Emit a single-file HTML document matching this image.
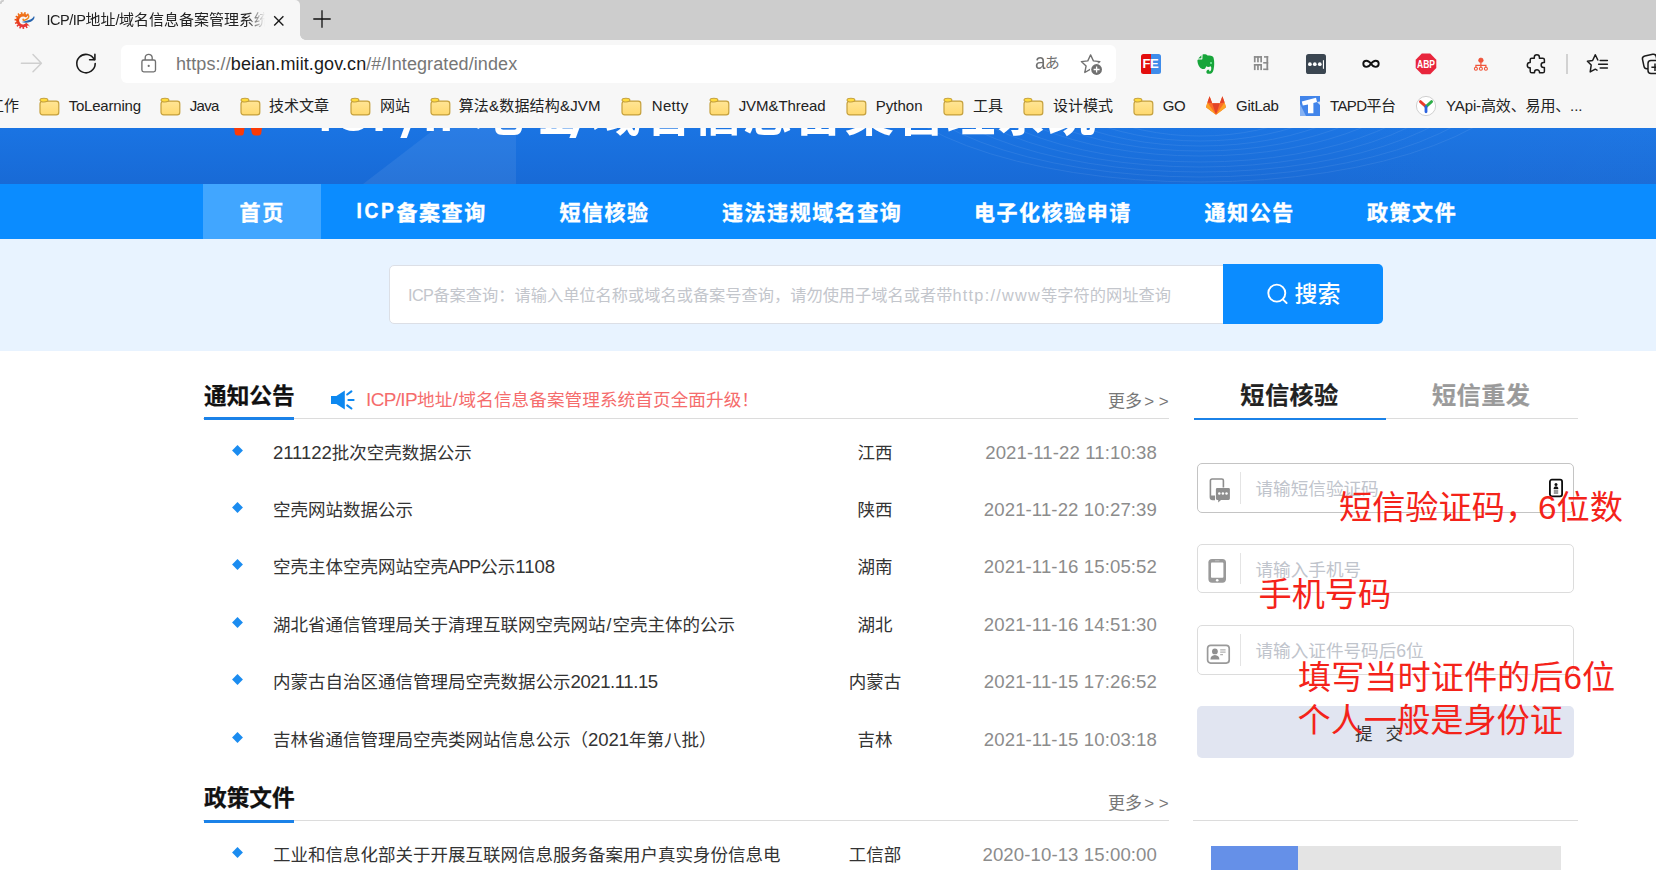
<!DOCTYPE html>
<html lang="zh-CN">
<head>
<meta charset="utf-8">
<title>ICP/IP地址/域名信息备案管理系统</title>
<style>
*{box-sizing:border-box;margin:0;padding:0}
html,body{width:1656px;height:870px;overflow:hidden;background:#fff}
body{font-family:"Liberation Sans","Noto Sans CJK SC",sans-serif;color:#333;position:relative}
.abs{position:absolute}
/* ---------- browser chrome ---------- */
#tabbar{position:absolute;left:0;top:0;width:1656px;height:39.6px;background:#cdcdcd}
#tab{position:absolute;left:0;top:0;width:300px;height:40px;background:#f7f7f7;border-radius:0 5px 0 0}
#tabcurve{position:absolute;left:300px;top:33.6px;width:6px;height:6px;background:radial-gradient(circle at 100% 0,rgba(0,0,0,0) 5.6px,#f7f7f7 6.2px)}
#tabtitle{position:absolute;left:46.5px;top:8.5px;width:220px;height:22px;line-height:22px;font-size:15px;color:#222;white-space:nowrap;overflow:hidden;-webkit-mask-image:linear-gradient(90deg,#000 200px,transparent 218px);mask-image:linear-gradient(90deg,#000 200px,transparent 218px)}
.lt{font-size:14.5px;letter-spacing:-0.5px}
#toolbar{position:absolute;left:0;top:39.6px;width:1656px;height:49px;background:#f7f7f7}
#addr{position:absolute;left:121px;top:45px;width:995px;height:37.5px;background:#fff;border-radius:6px}
#url{position:absolute;left:176px;top:51.5px;height:24px;line-height:24px;font-size:18px;color:#767676;white-space:nowrap;letter-spacing:0.1px}
#url b{font-weight:400;color:#1b1b1b}
#bookmarks{position:absolute;left:0;top:88px;width:1656px;height:40px;background:#f7f7f7}
.bm{position:absolute;top:94.5px;height:22px;line-height:22px;font-size:15px;color:#222;white-space:nowrap}
.fold{position:absolute;top:96.5px;width:21px;height:19px;margin-left:-0.5px}
/* ---------- page ---------- */
#hero{position:absolute;left:0;top:128px;width:1656px;height:56px;background:linear-gradient(180deg,#1a74e3 0%,#186ad6 100%);overflow:hidden}
#htitle{position:absolute;left:318.5px;top:-44px;font-size:49px;line-height:60px;font-weight:700;color:#fff;letter-spacing:1.7px;white-space:nowrap}
.sl{display:inline-block;transform:translate(-3.5px,5.5px) skewX(-9deg) scale(1.1,1)}
#nav{position:absolute;left:0;top:184px;width:1656px;height:55px;background:#0b8cff}
#navact{position:absolute;left:203px;top:184px;width:118px;height:55px;background:#41a6ff}
.ni{position:absolute;top:196.7px;height:32px;line-height:32px;font-size:21px;font-weight:700;color:#fff;letter-spacing:1.55px;-webkit-text-stroke:0.4px #fff;white-space:nowrap}
#searchbg{position:absolute;left:0;top:239px;width:1656px;height:112px;background:#e8f3ff}
#sinput{position:absolute;left:388.5px;top:265.3px;width:836px;height:59px;background:#fff;border:1px solid #dcdfe6;border-radius:5px 0 0 5px}
#sph{position:absolute;left:408px;top:283px;height:24px;line-height:24px;font-size:16.23px;color:#c3c6cc;white-space:nowrap}
#sbtn{position:absolute;left:1223px;top:264px;width:160px;height:60px;background:#0b8cff;border-radius:0 5px 5px 0}
#sbtn span{position:absolute;left:71.5px;top:13.5px;font-weight:500;font-size:23px;line-height:32px;color:#fff;white-space:nowrap}
.h2{position:absolute;font-size:22.7px;-webkit-text-stroke:0.25px #111;font-weight:700;color:#111;line-height:30px;white-space:nowrap}
.hr{position:absolute;height:1px;background:#dcdcdc}
.bl{position:absolute;height:2.4px;background:#1b82e8}
.more{position:absolute;font-size:17px;color:#777;line-height:24px;white-space:nowrap}
.row{position:absolute;left:203px;width:966px;height:30px;line-height:30px;font-size:17.5px;color:#333;white-space:nowrap}
.row i{position:absolute;left:30.3px;top:8px;width:9px;height:9px;background:#1b8cf0;transform:rotate(45deg) scale(.85)}
.row .t{position:absolute;left:70px;top:0}
.row .r{position:absolute;left:612px;width:120px;text-align:center;top:0}
.row .d{position:absolute;right:12px;top:0;color:#8c8c8c;font-size:18.6px;letter-spacing:0.1px}
.n{font-size:18.6px;letter-spacing:-0.1px}
.gg{font-size:17px;letter-spacing:4.6px;margin-left:2.2px;position:relative;top:-0.4px}
.tabr{position:absolute;font-size:24.2px;font-weight:700;line-height:30px;letter-spacing:0.4px;-webkit-text-stroke:0.2px currentColor;white-space:nowrap}
.inp{position:absolute;left:1197px;width:377px;height:49.6px;border:1px solid #dcdcdc;border-radius:5px;background:#fff}
.inp .sep{position:absolute;left:41.6px;top:8px;width:1px;height:31.5px;background:#e4e4e4}
.inp .ph{position:absolute;left:57.5px;top:13px;font-size:17.6px;line-height:24px;color:#c0c4cc;white-space:nowrap}
.red{position:absolute;color:#f4231a;font-size:33.2px;line-height:42px;white-space:nowrap}
#submit{position:absolute;left:1197px;top:706px;width:377px;height:52px;background:#e1e5f1;border-radius:5px}
#submit span{position:absolute;left:158px;top:14.5px;font-size:17.6px;line-height:26px;color:#333;letter-spacing:13px}
</style>
</head>
<body>
<!-- BROWSER CHROME -->
<div id="tabbar"></div>
<div id="tab"></div><div id="tabcurve"></div>
<div class="abs" style="left:0;top:0;width:4px;height:4px;background:radial-gradient(circle at 100% 100%,rgba(0,0,0,0) 2.2px,#c6c6c6 3px,#d6d6d6 4.2px,rgba(0,0,0,0) 5px)"></div>
<div id="tabtitle"><span class="lt">ICP/IP</span>地址<span class="lt">/</span>域名信息备案管理系统</div>
<div id="toolbar"></div>
<div id="addr"></div>
<div id="url">https://<b>beian.miit.gov.cn</b>/#/Integrated/index</div>
<div id="bookmarks"></div>
<div class="bm" style="left:-11px">工作</div>
<svg class="fold" style="left:39px" viewBox="0 0 21 19"><defs><linearGradient id="gfo" x1="0" y1="0" x2="0" y2="1"><stop offset="0" stop-color="#ffe596"/><stop offset="1" stop-color="#ffd96e"/></linearGradient></defs><rect x="1" y="4.1" width="18.8" height="13.8" rx="2.6" fill="url(#gfo)" stroke="#c5a03c" stroke-width="1.2"/><ellipse cx="4.95" cy="3.1" rx="3.95" ry="1.9" fill="#ffdb3e" stroke="#c5a03c" stroke-width="1.1"/></svg>
<div class="bm" style="left:68.7px;letter-spacing:-0.21px">ToLearning</div>
<svg class="fold" style="left:160px" viewBox="0 0 21 19"><rect x="1" y="4.1" width="18.8" height="13.8" rx="2.6" fill="url(#gfo)" stroke="#c5a03c" stroke-width="1.2"/><ellipse cx="4.95" cy="3.1" rx="3.95" ry="1.9" fill="#ffdb3e" stroke="#c5a03c" stroke-width="1.1"/></svg>
<div class="bm" style="left:189.7px;letter-spacing:-0.65px">Java</div>
<svg class="fold" style="left:240px" viewBox="0 0 21 19"><rect x="1" y="4.1" width="18.8" height="13.8" rx="2.6" fill="url(#gfo)" stroke="#c5a03c" stroke-width="1.2"/><ellipse cx="4.95" cy="3.1" rx="3.95" ry="1.9" fill="#ffdb3e" stroke="#c5a03c" stroke-width="1.1"/></svg>
<div class="bm" style="left:269px">技术文章</div>
<svg class="fold" style="left:350px" viewBox="0 0 21 19"><rect x="1" y="4.1" width="18.8" height="13.8" rx="2.6" fill="url(#gfo)" stroke="#c5a03c" stroke-width="1.2"/><ellipse cx="4.95" cy="3.1" rx="3.95" ry="1.9" fill="#ffdb3e" stroke="#c5a03c" stroke-width="1.1"/></svg>
<div class="bm" style="left:380px">网站</div>
<svg class="fold" style="left:430px" viewBox="0 0 21 19"><rect x="1" y="4.1" width="18.8" height="13.8" rx="2.6" fill="url(#gfo)" stroke="#c5a03c" stroke-width="1.2"/><ellipse cx="4.95" cy="3.1" rx="3.95" ry="1.9" fill="#ffdb3e" stroke="#c5a03c" stroke-width="1.1"/></svg>
<div class="bm" style="left:458.7px;letter-spacing:0.18px">算法&amp;数据结构&amp;JVM</div>
<svg class="fold" style="left:621px" viewBox="0 0 21 19"><rect x="1" y="4.1" width="18.8" height="13.8" rx="2.6" fill="url(#gfo)" stroke="#c5a03c" stroke-width="1.2"/><ellipse cx="4.95" cy="3.1" rx="3.95" ry="1.9" fill="#ffdb3e" stroke="#c5a03c" stroke-width="1.1"/></svg>
<div class="bm" style="left:651.7px;letter-spacing:0.36px">Netty</div>
<svg class="fold" style="left:709px" viewBox="0 0 21 19"><rect x="1" y="4.1" width="18.8" height="13.8" rx="2.6" fill="url(#gfo)" stroke="#c5a03c" stroke-width="1.2"/><ellipse cx="4.95" cy="3.1" rx="3.95" ry="1.9" fill="#ffdb3e" stroke="#c5a03c" stroke-width="1.1"/></svg>
<div class="bm" style="left:738.7px;letter-spacing:-0.07px">JVM&amp;Thread</div>
<svg class="fold" style="left:846px" viewBox="0 0 21 19"><rect x="1" y="4.1" width="18.8" height="13.8" rx="2.6" fill="url(#gfo)" stroke="#c5a03c" stroke-width="1.2"/><ellipse cx="4.95" cy="3.1" rx="3.95" ry="1.9" fill="#ffdb3e" stroke="#c5a03c" stroke-width="1.1"/></svg>
<div class="bm" style="left:875.7px;letter-spacing:0.02px">Python</div>
<svg class="fold" style="left:943px" viewBox="0 0 21 19"><rect x="1" y="4.1" width="18.8" height="13.8" rx="2.6" fill="url(#gfo)" stroke="#c5a03c" stroke-width="1.2"/><ellipse cx="4.95" cy="3.1" rx="3.95" ry="1.9" fill="#ffdb3e" stroke="#c5a03c" stroke-width="1.1"/></svg>
<div class="bm" style="left:973px">工具</div>
<svg class="fold" style="left:1023px" viewBox="0 0 21 19"><rect x="1" y="4.1" width="18.8" height="13.8" rx="2.6" fill="url(#gfo)" stroke="#c5a03c" stroke-width="1.2"/><ellipse cx="4.95" cy="3.1" rx="3.95" ry="1.9" fill="#ffdb3e" stroke="#c5a03c" stroke-width="1.1"/></svg>
<div class="bm" style="left:1053px">设计模式</div>
<svg class="fold" style="left:1133px" viewBox="0 0 21 19"><rect x="1" y="4.1" width="18.8" height="13.8" rx="2.6" fill="url(#gfo)" stroke="#c5a03c" stroke-width="1.2"/><ellipse cx="4.95" cy="3.1" rx="3.95" ry="1.9" fill="#ffdb3e" stroke="#c5a03c" stroke-width="1.1"/></svg>
<div class="bm" style="left:1162.7px;letter-spacing:-0.25px">GO</div>
<div class="bm" style="left:1236.0px;letter-spacing:-0.25px">GitLab</div>
<div class="bm" style="left:1329.9px;letter-spacing:-0.55px">TAPD平台</div>
<div class="bm" style="left:1446.1px;letter-spacing:-0.14px">YApi-高效、易用、...</div>

<!-- toolbar icons -->
<svg class="abs" style="left:10.5px;top:6px" width="28" height="28" viewBox="0 0 28 28">
 <defs><linearGradient id="gfav" x1="0" y1="0" x2="0" y2="1"><stop offset="0" stop-color="#f0761a"/><stop offset=".5" stop-color="#e8410f"/><stop offset="1" stop-color="#e8343a"/></linearGradient></defs>
 <path d="M16.06 10.58 A5.50 5.50 0 1 0 16.43 17.79" fill="none" stroke="url(#gfav)" stroke-width="3"/>
 <path d="M17.28 9.04 A7.45 7.45 0 1 0 17.81 19.19" fill="none" stroke="url(#gfav)" stroke-width="2.2" stroke-dasharray="1.50 1.62"/>
 <path d="M10.6 15.9 C14.6 17.4 20 16.6 22.6 13.4 C23.6 12.2 23.8 10.8 23 9.9 C22.4 11.6 20.4 13.4 17.2 14.3 C15 14.9 12.6 15.5 10.6 15.9 Z" fill="#2764ae"/>
 <path d="M17.6 9.6 C18.4 11.4 16.6 13.6 13.4 14.2 C12.4 14.4 11.8 14 12.2 13.2" fill="none" stroke="#f0861c" stroke-width="1.5" stroke-linecap="round"/>
</svg>
<svg class="abs" style="left:269.3px;top:10.6px" width="20" height="20" viewBox="0 0 20 20"><path d="M5.2 5.2 L14.4 14.4 M14.4 5.2 L5.2 14.4" stroke="#1a1a1a" stroke-width="1.35" fill="none"/></svg>
<svg class="abs" style="left:310.6px;top:8.3px" width="22" height="22" viewBox="0 0 22 22"><path d="M11 2.3 V19.7 M2.3 11 H19.7" stroke="#111" stroke-width="1.3" fill="none"/></svg>
<svg class="abs" style="left:18px;top:51px" width="26" height="26" viewBox="0 0 26 26"><path d="M3.4 12.2 H23 M15 3.6 L23.4 12.2 L15 20.8" stroke="#cfcfcf" stroke-width="1.5" fill="none" stroke-linecap="round" stroke-linejoin="round"/></svg>
<svg class="abs" style="left:73px;top:51px" width="26" height="26" viewBox="0 0 26 26"><path d="M21.3 8.6 A9.2 9.2 0 1 0 22.2 12.6" stroke="#1b1b1b" stroke-width="1.6" fill="none" stroke-linecap="round"/><path d="M16.6 8.7 H21.9 V3.4" stroke="#1b1b1b" stroke-width="1.6" fill="none" stroke-linecap="round" stroke-linejoin="round"/></svg>
<svg class="abs" style="left:138px;top:51px" width="22" height="24" viewBox="0 0 22 24"><rect x="3.9" y="9" width="13.6" height="11.8" rx="1.8" fill="none" stroke="#707070" stroke-width="1.35"/><path d="M7.2 9 V6.8 A3.5 3.5 0 0 1 14.2 6.8 V9" fill="none" stroke="#707070" stroke-width="1.35"/><circle cx="10.7" cy="14.9" r="1.1" fill="#707070"/></svg>
<div class="abs" style="left:1034.5px;top:49px;height:26px;line-height:26px;color:#707070;white-space:nowrap"><span style="display:inline-block;font-size:22px;transform:scale(.86,1.04);transform-origin:0 78%">a</span><span style="font-size:15px;margin-left:-2px;position:relative;top:-0.9px">あ</span></div>
<svg class="abs" style="left:1078px;top:51px" width="28" height="26" viewBox="0 0 28 26"><path d="M12.6 3.9 L15.4 9.9 L21.9 10.6 L17.1 15 L18.4 21.5 L12.6 18.2 L6.8 21.5 L8.1 15 L3.3 10.6 L9.8 9.9 Z" fill="none" stroke="#707070" stroke-width="1.35" stroke-linejoin="round"/><circle cx="18.6" cy="18.5" r="6.6" fill="#fff"/><circle cx="18.6" cy="18.5" r="5.4" fill="#707070"/><path d="M18.6 15.5 V21.5 M15.6 18.5 H21.6" stroke="#fff" stroke-width="1.3"/></svg>
<!-- FE -->
<div class="abs" style="left:1141px;top:53.5px;width:20px;height:20px;border-radius:2.5px;overflow:hidden;background:linear-gradient(90deg,#e30e0e 0,#e30e0e 52%,#3f8cea 52%)"><span style="position:absolute;left:1.6px;top:2.2px;font-size:13px;line-height:15px;font-weight:700;color:#fff;letter-spacing:-0.6px">FE</span></div>
<!-- evernote -->
<svg class="abs" style="left:1196px;top:53px" width="20" height="22" viewBox="0 0 20 22"><path d="M6.6 1.6 C8 1 10.6 1.2 11.6 2.4 C14 2.4 16.4 2.8 17.2 4 C18.4 6.6 18.6 12.4 17.6 16.4 C17 19.6 15.4 20.8 12.8 20.8 C11 20.8 10.2 19.8 10.4 18.4 C10.6 17 11.8 16.6 13.2 16.8 L13.2 18.2 C14.4 18.4 15 17.6 15.2 16.2 C15.4 14.6 15.2 13.6 14.6 13.2 C13.4 14 11.4 14.2 10.2 13.2 C9.6 15.6 8.4 16.4 6.4 16 C3.6 15.4 1.6 11.6 1.4 7.6 C1.4 6.8 2 6.4 2.8 6.4 L5.6 6.4 C6.2 6.4 6.4 6 6.4 5.4 Z" fill="#17a53a"/><path d="M5.4 2.2 L5.4 5.2 L2.2 5.4 Z" fill="#17a53a"/><circle cx="15" cy="10" r="1" fill="#7df0a4"/></svg>
<!-- gray m3 -->
<svg class="abs" style="left:1253px;top:55px" width="17" height="17" viewBox="0 0 17 17" fill="#8b8b8b"><rect x="0.9" y="1.1" width="8.1" height="1.7"/><rect x="0.9" y="1.1" width="1.7" height="6.2"/><rect x="4.1" y="1.1" width="1.7" height="6.2"/><rect x="7.3" y="1.1" width="1.7" height="6.2"/><rect x="0.9" y="9" width="8.1" height="1.7"/><rect x="0.9" y="9" width="1.7" height="6.1"/><rect x="4.1" y="9" width="1.7" height="6.1"/><rect x="7.3" y="9" width="1.7" height="6.1"/><rect x="11" y="1.1" width="4.2" height="1.6"/><rect x="13.4" y="1.1" width="1.8" height="14"/><rect x="10.2" y="7" width="5" height="1.6"/><rect x="10.2" y="13.5" width="5" height="1.6"/></svg>
<!-- dark box -->
<div class="abs" style="left:1306px;top:53.7px;width:20px;height:20px;border-radius:2.6px;background:#3b4651"></div>
<svg class="abs" style="left:1306px;top:53.7px" width="20" height="20" viewBox="0 0 20 20"><circle cx="3.9" cy="10.2" r="1.85" fill="#fff"/><circle cx="8.8" cy="10.2" r="1.85" fill="#fff"/><circle cx="13.8" cy="10.2" r="1.85" fill="#fff"/><rect x="16.9" y="6.2" width="1.1" height="8.6" fill="#fff"/></svg>
<!-- infinity -->
<svg class="abs" style="left:1360px;top:56px" width="22" height="16" viewBox="0 0 22 16"><path d="M11 7.8 C9.6 5.7 8 4.7 6.4 4.7 A3.1 3.1 0 0 0 6.4 10.9 C8 10.9 9.6 9.9 11 7.8 C12.4 5.7 14 4.7 15.6 4.7 A3.1 3.1 0 0 1 15.6 10.9 C14 10.9 12.4 9.9 11 7.8 Z" fill="none" stroke="#111" stroke-width="1.9"/></svg>
<!-- ABP -->
<svg class="abs" style="left:1415px;top:53px" width="22" height="22" viewBox="0 0 22 22"><path d="M6.8 0.6 H15.2 L21.3 6.7 V15.1 L15.2 21.2 H6.8 L0.7 15.1 V6.7 Z" fill="#e8253c"/><text x="2" y="14.6" textLength="18" lengthAdjust="spacingAndGlyphs" font-family="Liberation Sans, sans-serif" font-weight="700" font-size="10.2" fill="#fff">ABP</text></svg>
<!-- sitemap -->
<svg class="abs" style="left:1472px;top:56px" width="18" height="17" viewBox="0 0 18 17"><circle cx="8.9" cy="4.3" r="2.3" fill="#f2553c" stroke="#e8452c" stroke-width=".6"/><path d="M8.9 6.6 V9.4 M3.9 11.2 V9.4 H13.9 V11.2 M8.9 9.4 V11.2" stroke="#f0553a" stroke-width="1.2" fill="none"/><circle cx="3.9" cy="12.7" r="1.5" fill="none" stroke="#f0553a" stroke-width="1.1"/><circle cx="8.9" cy="12.7" r="1.5" fill="none" stroke="#f0553a" stroke-width="1.1"/><circle cx="13.9" cy="12.7" r="1.5" fill="none" stroke="#f0553a" stroke-width="1.1"/></svg>
<!-- puzzle -->
<svg class="abs" style="left:1524px;top:51px" width="24" height="26" viewBox="0 0 24 26"><path d="M10.3 6.3 A2.55 2.55 0 0 1 15.4 6.3 V7.2 H18.8 Q20.4 7.2 20.4 8.8 V11.6 H19.6 A2.45 2.45 0 0 0 19.6 16.5 H20.4 V20.2 Q20.4 21.8 18.8 21.8 H15.5 V21.2 A2.5 2.5 0 0 0 10.5 21.2 V21.8 H7.8 Q6.2 21.8 6.2 20.2 V16.8 H5.9 A2.6 2.6 0 0 1 5.9 11.6 H6.2 V8.8 Q6.2 7.2 7.8 7.2 H10.3 Z" fill="none" stroke="#1b1b1b" stroke-width="1.5" stroke-linejoin="round"/></svg>
<div class="abs" style="left:1566.4px;top:54px;width:1.4px;height:19.5px;background:#d2d2d2"></div>
<!-- favorites -->
<svg class="abs" style="left:1584px;top:51px" width="28" height="26" viewBox="0 0 28 26"><path d="M13.8 9 L11.3 3.8 L8.6 9.5 L3.4 10.2 L7.2 14 L6.2 20.9 L11.3 18.2 L13 19.1" fill="none" stroke="#1b1b1b" stroke-width="1.5" stroke-linejoin="round" stroke-linecap="round"/><path d="M16.2 9.6 H23.4 M14.6 13.3 H23.4 M16.2 17 H23.4" stroke="#1b1b1b" stroke-width="1.5" stroke-linecap="round"/></svg>
<!-- collections -->
<svg class="abs" style="left:1640px;top:51px" width="16" height="26" viewBox="0 0 16 26"><rect x="3" y="4" width="14" height="13" rx="3" transform="rotate(-12 10 10)" fill="none" stroke="#1b1b1b" stroke-width="1.5"/><rect x="8" y="9.5" width="14" height="13" rx="3" fill="#f7f7f7" stroke="#1b1b1b" stroke-width="1.5"/><path d="M15 12.5 V20 M11.4 16.2 H18" stroke="#1b1b1b" stroke-width="1.5"/></svg>
<!-- bookmark favicons -->
<svg class="abs" style="left:1205px;top:95px" width="22" height="21" viewBox="0 0 22 21"><path d="M11 19.8 L1 12.2 L2.4 7.6 L4.6 1.2 L7.2 8.2 H14.8 L17.4 1.2 L19.6 7.6 L21 12.2 Z" fill="#fc6d26"/><path d="M11 19.8 L7.2 8.2 H14.8 Z" fill="#e24329"/><path d="M11 19.8 L1 12.2 L2.4 7.6 Z M11 19.8 L21 12.2 L19.6 7.6 Z" fill="#fca326"/><path d="M2.4 7.6 L4.6 1.2 L7.2 8.2 Z M19.6 7.6 L17.4 1.2 L14.8 8.2 Z" fill="#e24329"/></svg>
<svg class="abs" style="left:1300px;top:96px" width="20" height="20" viewBox="0 0 20 20"><rect width="20" height="20" fill="#4285ea"/><path d="M1.8 5.6 L16 1.8 L17 6 L13.4 7 V17.2 H8 V8.4 L2.8 9.6 Z" fill="#fff"/><path d="M0 8 L6 20 H0 Z" fill="#8db6f4" opacity=".9"/><path d="M17 6 L20 5.4 V9 Z" fill="#cfe0fa"/></svg>
<svg class="abs" style="left:1415px;top:94.5px" width="22" height="22" viewBox="0 0 22 22"><circle cx="11" cy="11" r="9.6" fill="#fff" stroke="#d0d0d0" stroke-width="1"/><path d="M11 11.6 L5.4 6.6" stroke="#ea3a2c" stroke-width="2.8" stroke-linecap="round"/><path d="M11 11.6 L16.6 6.6" stroke="#2fae4a" stroke-width="2.8" stroke-linecap="round"/><path d="M11 11.6 V16.8" stroke="#2a62e0" stroke-width="2.8" stroke-linecap="round"/></svg>
<!-- PAGE -->
<div id="hero">
<div class="abs" style="left:0;top:0;width:1656px;height:56px;background:linear-gradient(90deg,rgba(255,255,255,0) 0,rgba(255,255,255,0) 60%,rgba(255,255,255,.02) 100%)"></div>
<svg class="abs" style="left:340px;top:0" width="200" height="56" viewBox="0 0 200 56"><path d="M23 56 L96 0 H176 V56 Z" fill="#ffffff" opacity=".07"/></svg>
<svg class="abs" style="left:230px;top:0" width="36" height="10" viewBox="0 0 36 10"><path d="M4.2 0 H14.6 L13.6 6 Q13.2 7.6 11.4 7.6 H7.2 Q5.2 7.6 4.9 5.8 Z" fill="#fb3a06"/><path d="M20.8 0 H32 L31.2 5.6 Q30.8 7.6 28.6 7.6 H25 Q22.8 7.6 22 5.6 Z" fill="#fb3a06"/></svg>
<svg class="abs" style="left:900px;top:0" width="756" height="56" viewBox="0 0 756 56" fill="none" stroke="#fff" stroke-width="1" opacity=".07"><ellipse cx="300" cy="-70" rx="150" ry="78"/><ellipse cx="300" cy="-70" rx="170" ry="83"/><ellipse cx="300" cy="-70" rx="190" ry="88"/><ellipse cx="300" cy="-70" rx="210" ry="93"/><ellipse cx="300" cy="-70" rx="230" ry="98"/><ellipse cx="300" cy="-70" rx="250" ry="104"/><ellipse cx="300" cy="-70" rx="270" ry="109"/><ellipse cx="300" cy="-70" rx="290" ry="114"/><ellipse cx="300" cy="-70" rx="310" ry="119"/><ellipse cx="300" cy="-70" rx="330" ry="124"/></svg>
<div id="htitle"><span style="letter-spacing:2.4px">ICP<span class="sl">/</span>IP</span>地址<span class="sl">/</span>域名信息备案管理系统</div>
</div>
<div id="nav"></div><div id="navact"></div>
<div class="ni" style="left:239.6px">首页</div>
<div class="ni" style="left:356.4px"><span style="display:inline-block;letter-spacing:2.7px;font-size:19.2px;transform:translateY(-1.4px) scaleY(1.115);transform-origin:0 72%">ICP</span>备案查询</div>
<div class="ni" style="left:559.4px">短信核验</div>
<div class="ni" style="left:722px">违法违规域名查询</div>
<div class="ni" style="left:974px">电子化核验申请</div>
<div class="ni" style="left:1204.6px">通知公告</div>
<div class="ni" style="left:1367px">政策文件</div>
<div id="searchbg"></div>
<div id="sinput"></div>
<div id="sph"><span style="letter-spacing:-0.55px">ICP</span>备案查询：请输入单位名称或域名或备案号查询，请勿使用子域名或者带<span id="hw" style="letter-spacing:1.3px">http://www</span>等字符的网址查询</div>
<div id="sbtn"><svg style="position:absolute;left:40px;top:16px" width="28" height="28" viewBox="0 0 28 28"><circle cx="13.8" cy="13.1" r="8.5" fill="none" stroke="#fff" stroke-width="1.9"/><path d="M19.8 19.4 L23.6 23" stroke="#fff" stroke-width="1.9" stroke-linecap="round"/></svg><span>搜索</span></div>

<div class="h2" style="left:204px;top:381.3px">通知公告</div>
<div class="hr" style="left:203px;top:418px;width:965.7px"></div>
<div class="bl" style="left:204px;top:417.4px;width:90px"></div>
<div class="abs" style="left:366px;top:388px;font-size:17.6px;line-height:24px;color:#f56c6c;letter-spacing:0.08px;white-space:nowrap"><span id="nl" style="font-size:19px;letter-spacing:-0.65px">ICP/IP</span>地址<span id="ns" style="font-size:19px;letter-spacing:0.5px;margin-left:0.4px">/</span>域名信息备案管理系统首页全面升级！</div>
<svg class="abs" style="left:330px;top:388px" width="26" height="24" viewBox="0 0 26 24"><path d="M1 8.1 H6.4 L14.8 2.6 V21.4 L6.4 15.9 H1 Z" fill="#0d88f0"/><path d="M18.4 12 H23.6 M17.2 6.5 L21.4 3.3 M17.2 17.3 L21.4 20.5" stroke="#0d88f0" stroke-width="2.1" stroke-linecap="round"/></svg>
<div class="more" style="left:1108px;top:390px">更多<span class="gg">&gt;&gt;</span></div>
<div class="row" style="top:437.5px"><i></i><span class="t"><span class="n">211122</span>批次空壳数据公示</span><span class="r">江西</span><span class="d">2021-11-22 11:10:38</span></div>
<div class="row" style="top:494.9px"><i></i><span class="t">空壳网站数据公示</span><span class="r">陕西</span><span class="d">2021-11-22 10:27:39</span></div>
<div class="row" style="top:552.3px"><i></i><span class="t">空壳主体空壳网站空壳<span style="letter-spacing:-0.9px">APP</span>公示<span class="n">1108</span></span><span class="r">湖南</span><span class="d">2021-11-16 15:05:52</span></div>
<div class="row" style="top:609.7px"><i></i><span class="t">湖北省通信管理局关于清理互联网空壳网站<span style="letter-spacing:1.2px;margin-left:1px">/</span>空壳主体的公示</span><span class="r">湖北</span><span class="d">2021-11-16 14:51:30</span></div>
<div class="row" style="top:667.1px"><i></i><span class="t">内蒙古自治区通信管理局空壳数据公示<span class="n" style="letter-spacing:-0.45px">2021.11.15</span></span><span class="r">内蒙古</span><span class="d">2021-11-15 17:26:52</span></div>
<div class="row" style="top:724.5px"><i></i><span class="t">吉林省通信管理局空壳类网站信息公示（<span class="n">2021</span>年第八批）</span><span class="r">吉林</span><span class="d">2021-11-15 10:03:18</span></div>
<div class="row" style="top:839.6px"><i></i><span class="t">工业和信息化部关于开展互联网信息服务备案用户真实身份信息电</span><span class="r">工信部</span><span class="d">2020-10-13 15:00:00</span></div>

<div class="h2" style="left:204px;top:783.3px">政策文件</div>
<div class="hr" style="left:203px;top:820.4px;width:965.7px"></div>
<div class="bl" style="left:204px;top:820.3px;width:90px;height:2.7px"></div>
<div class="more" style="left:1108px;top:792px">更多<span class="gg">&gt;&gt;</span></div>

<div class="tabr" style="left:1240.3px;top:380.5px;color:#222">短信核验</div>
<div class="tabr" style="left:1432px;top:380.5px;color:#9a9a9a">短信重发</div>
<div class="hr" style="left:1194.4px;top:418px;width:383.6px"></div>
<div class="bl" style="left:1194.4px;top:417.6px;width:191.4px"></div>
<div class="inp" style="top:463.3px;border-color:#c4c4c4"><div class="sep"></div><div class="ph">请输短信验证码</div></div>
<div class="inp" style="top:543.8px"><div class="sep"></div><div class="ph">请输入手机号</div></div>
<div class="inp" style="top:625.2px"><div class="sep"></div><div class="ph">请输入证件号码后6位</div></div>

<svg class="abs" style="left:1206px;top:474px" width="28" height="32" viewBox="0 0 28 32"><path d="M17.4 13.4 V6.6 Q17.4 5 15.8 5 H6.2 Q4.4 5 4.4 6.8 V23 Q4.4 25.4 6.6 25.4 H9" fill="none" stroke="#8e8e8e" stroke-width="1.6"/><path d="M4.4 21.4 H9 V25.4 H6.6 Q4.4 25.4 4.4 23 Z" fill="#8e8e8e"/><path d="M11.2 14 H22.6 Q23.9 14 23.9 15.3 V24.6 Q23.9 25.9 22.6 25.9 H15 L12.2 28.4 V25.9 H11.2 Q9.9 25.9 9.9 24.6 V15.3 Q9.9 14 11.2 14 Z" fill="#8e8e8e"/><circle cx="13.3" cy="19.6" r="1.25" fill="#fff"/><circle cx="16.9" cy="19.6" r="1.25" fill="#fff"/><circle cx="20.5" cy="19.6" r="1.25" fill="#fff"/></svg>
<svg class="abs" style="left:1206px;top:556px" width="24" height="30" viewBox="0 0 24 30"><rect x="2.4" y="2.9" width="17.6" height="23.8" rx="3.6" fill="#9a9a9a"/><rect x="5" y="6.6" width="12.4" height="15.2" rx="0.8" fill="#fff"/><circle cx="11.2" cy="24.3" r="1.3" fill="#fff"/><rect x="8.8" y="4.3" width="4.8" height="0.9" rx=".4" fill="#bdbdbd"/></svg>
<svg class="abs" style="left:1205px;top:642px" width="28" height="24" viewBox="0 0 28 24"><rect x="2.6" y="3.3" width="21.6" height="17.8" rx="3" fill="#fff" stroke="#9a9a9a" stroke-width="1.7"/><circle cx="9.9" cy="9.4" r="2.9" fill="#909090"/><path d="M5.4 17.4 Q5.6 13.4 9.9 13 Q14.2 13.4 14.4 17.4 Z" fill="#909090"/><path d="M15.2 7.8 H20.6 M15.2 10.2 H20.6 M15.2 12.6 H18" stroke="#b0b0b0" stroke-width="1.3"/></svg>
<svg class="abs" style="left:1547px;top:477px" width="18" height="22" viewBox="0 0 18 22"><rect x="2.9" y="2.7" width="12.2" height="16.6" rx="2" fill="#fff" stroke="#0c0c0c" stroke-width="1.8"/><circle cx="9" cy="7.6" r="1.5" fill="#111"/><path d="M6.6 12 Q6.8 9.2 9 9.2 Q11.2 9.2 11.4 12 Z" fill="#111"/><rect x="6.8" y="12.6" width="4.4" height="4.4" fill="#9a9a9a"/></svg>
<div id="submit"><span>提交</span></div>
<div class="red" style="left:1339px;top:486.5px">短信验证码，6位数</div>
<div class="red" style="left:1258.5px;top:573.7px">手机号码</div>
<div class="red" style="left:1298px;top:657px">填写当时证件的后6位</div>
<div class="red" style="left:1297.5px;top:700.2px">个人一般是身份证</div>
<div class="hr" style="left:1193px;top:819.7px;width:385px"></div>
<div class="abs" style="left:1211px;top:846px;width:350px;height:24px;background:#e4e4e4"></div>
<div class="abs" style="left:1211px;top:846px;width:87px;height:24px;background:#6590e8"></div>
</body>
</html>
